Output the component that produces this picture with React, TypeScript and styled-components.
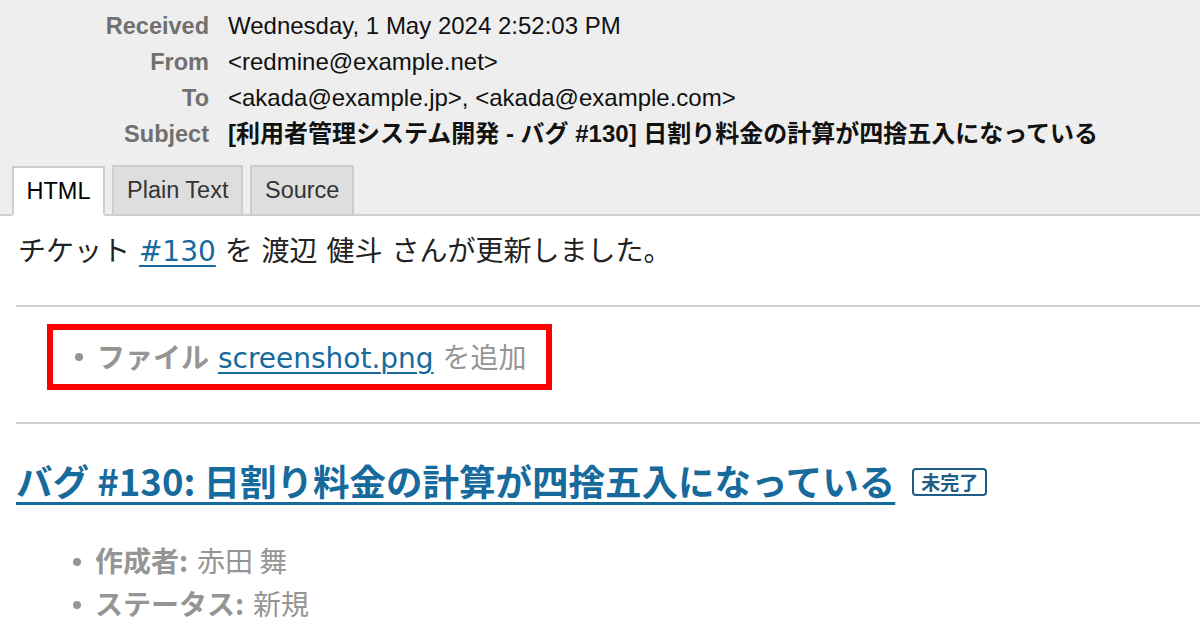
import React from "react";
import styled, { createGlobalStyle } from "styled-components";

const GlobalStyle = createGlobalStyle`
  html, body { margin: 0; padding: 0; background: #ffffff; }
  body { width: 1200px; height: 630px; overflow: hidden; }
  * { box-sizing: border-box; }
`;

const Page = styled.div`
  width: 1200px;
  height: 630px;
  overflow: hidden;
  display: flex;
  flex-direction: column;
`;

const Header = styled.header`
  background: #eeeeee;
  padding-top: 8px;
  font-family: "Liberation Sans", "Noto Sans CJK JP", sans-serif;
  border-bottom: 2px solid #cfcfcf;
`;

const Fields = styled.dl`
  display: grid;
  grid-template-columns: 209px 1fr;
  column-gap: 19px;
  margin: 0;
`;

const Label = styled.dt`
  text-align: right;
  font-weight: bold;
  color: #707070;
  font-size: 23.5px;
  line-height: 36px;
`;

const Value = styled.dd<{ $bold?: boolean }>`
  margin: 0;
  color: #111111;
  font-size: 24px;
  line-height: 36px;
  font-weight: ${(p) => (p.$bold ? "bold" : "normal")};
  white-space: nowrap;
`;

const TabBar = styled.nav`
  display: flex;
  align-items: flex-end;
  gap: 7.5px;
  padding-left: 12px;
  margin-top: 13px;
  margin-bottom: -2px;
`;

const Tab = styled.div<{ $active?: boolean }>`
  height: ${(p) => (p.$active ? "50px" : "51px")};
  padding: 0 12.5px;
  display: flex;
  align-items: center;
  font-size: 23.5px;
  color: ${(p) => (p.$active ? "#000000" : "#333333")};
  background: ${(p) => (p.$active ? "#ffffff" : "#dedede")};
  border: 2px solid #cdcdcd;
  border-bottom: ${(p) => (p.$active ? "2px solid #ffffff" : "2px solid #cfcfcf")};
`;

const Body = styled.main`
  padding: 0 0 0 16px;
  font-family: "DejaVu Sans", "Noto Sans CJK JP", sans-serif;
  font-size: 28px;
  color: #222222;
`;

const Para = styled.p`
  margin: 16px 0 0;
  line-height: 40px;
  padding-left: 2px;
  white-space: nowrap;
`;

const Link = styled.a`
  color: #176a9c;
  text-decoration: underline;
  text-underline-offset: 4px;
  text-decoration-thickness: 2px;
`;

const Rule = styled.hr<{ $top: number }>`
  margin: ${(p) => p.$top}px 0 0;
  border: 0;
  border-top: 2px solid #d2d2d2;
  height: 0;
`;

const BoxWrap = styled.div`
  display: flex;
`;

const HighlightBox = styled.ul`
  margin: 17px 0 0 31px;
  padding: 0 19px 0 22px;
  list-style: none;
  display: inline-flex;
  height: 66px;
  align-items: center;
  border: 6px solid #ff0000;
`;

const DetailList = styled.ul`
  list-style: none;
  margin: 36px 0 0 57px;
  padding: 0;
`;

const DetailItem = styled.li`
  display: flex;
  align-items: center;
  gap: 14px;
  line-height: 40px;
  color: #959595;
  white-space: nowrap;
  &::before {
    content: "";
    width: 8px;
    height: 8px;
    border-radius: 50%;
    background: #959595;
    flex: none;
  }
`;

const Strong = styled.strong`
  font-family: "Noto Sans CJK JP", sans-serif;
  font-weight: bold;
`;

const Plain = styled.span`
  font-family: "Noto Sans CJK JP", sans-serif;
`;

const TitleRow = styled.div`
  display: flex;
  align-items: center;
  gap: 17px;
  margin-top: 32px;
  height: 48px;
`;

const Title = styled.a`
  font-family: "Noto Sans CJK JP", sans-serif;
  font-weight: bold;
  font-size: 36.5px;
  color: #176a9c;
  text-decoration: underline;
  text-underline-offset: 6px;
  text-decoration-thickness: 3px;
  white-space: nowrap;
`;

const Badge = styled.span`
  font-family: "Noto Sans CJK JP", sans-serif;
  font-size: 19px;
  font-weight: bold;
  line-height: 22px;
  color: #205d86;
  border: 2px solid #205d86;
  border-radius: 4px;
  padding: 1px 7px;
  margin-top: 4px;
`;

export default function App() {
  return (
    <Page>
      <GlobalStyle />
      <Header>
        <Fields>
          <Label>Received</Label>
          <Value>Wednesday, 1 May 2024 2:52:03 PM</Value>
          <Label>From</Label>
          <Value>&lt;redmine@example.net&gt;</Value>
          <Label>To</Label>
          <Value>&lt;akada@example.jp&gt;, &lt;akada@example.com&gt;</Value>
          <Label>Subject</Label>
          <Value $bold>[利用者管理システム開発 - バグ #130] 日割り料金の計算が四捨五入になっている</Value>
        </Fields>
        <TabBar>
          <Tab $active>HTML</Tab>
          <Tab>Plain Text</Tab>
          <Tab>Source</Tab>
        </TabBar>
      </Header>
      <Body>
        <Para>
          チケット <Link href="#">#130</Link> を 渡辺 健斗 さんが更新しました。
        </Para>
        <Rule $top={33} />
        <BoxWrap>
          <HighlightBox>
            <DetailItem>
              <span>
                <Strong>ファイル</Strong> <Link href="#">screenshot.png</Link> <Plain>を追加</Plain>
              </span>
            </DetailItem>
          </HighlightBox>
        </BoxWrap>
        <Rule $top={32} />
        <TitleRow>
          <Title href="#">バグ #130: 日割り料金の計算が四捨五入になっている</Title>
          <Badge>未完了</Badge>
        </TitleRow>
        <DetailList>
          <DetailItem>
            <span>
              <Strong>作成者:</Strong> <Plain>赤田 舞</Plain>
            </span>
          </DetailItem>
          <DetailItem>
            <span>
              <Strong>ステータス:</Strong> <Plain>新規</Plain>
            </span>
          </DetailItem>
          <DetailItem>
            <span>
              <Strong>優先度:</Strong> <Plain>通常</Plain>
            </span>
          </DetailItem>
        </DetailList>
      </Body>
    </Page>
  );
}
